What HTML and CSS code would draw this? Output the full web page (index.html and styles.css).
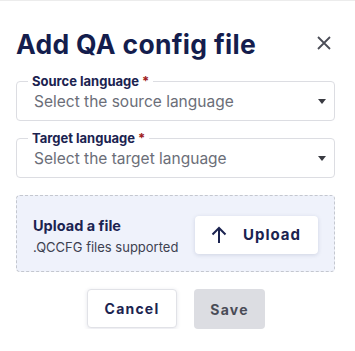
FILE: index.html
```html
<!DOCTYPE html>
<html lang="en">

<head>
    <meta charset="UTF-8">
    <meta name="viewport" content="width=device-width, initial-scale=1.0">
    <title>Add QA config file</title>
    <link rel="stylesheet" href="styles.css">
</head>

<body>
    <div class="dialog">
        <div class="header">
            <h1>Add QA config file</h1>
            <button class="close" aria-label="Close">
                <svg width="14" height="14" viewBox="0 0 14 14">
                    <path d="M1 1 L13 13 M13 1 L1 13" stroke="#4b4d57" stroke-width="1.8" fill="none" />
                </svg>
            </button>
        </div>

        <fieldset class="field">
            <legend>Source language <span class="req">*</span></legend>
            <div class="select">
                <span>Select the source language</span>
                <span class="caret"></span>
            </div>
        </fieldset>

        <fieldset class="field">
            <legend>Target language <span class="req">*</span></legend>
            <div class="select">
                <span>Select the target language</span>
                <span class="caret"></span>
            </div>
        </fieldset>

        <div class="upload">
            <div class="upload-text">
                <div class="upload-title">Upload a file</div>
                <div class="upload-hint">.QCCFG files supported</div>
            </div>
            <button class="upload-btn">
                <svg width="16" height="18" viewBox="0 0 16 18">
                    <path d="M8 17 V2 M1.5 8.5 L8 2 L14.5 8.5" stroke="#1b2350" stroke-width="2" fill="none" />
                </svg>
                Upload
            </button>
        </div>

        <div class="actions">
            <button class="btn cancel">Cancel</button>
            <button class="btn save" disabled>Save</button>
        </div>
    </div>
</body>

</html>
```

FILE: styles.css
```css
body {
    margin: 0;
    background: #fff;
    font-family: Inter, "Open Sans", sans-serif;
    color: #1b2350;
}

.dialog {
    border-top: 1px solid #ececec;
    padding: 0 20px 0 16px;
}

.header {
    display: flex;
    align-items: center;
    justify-content: space-between;
    height: 73px;
}

.header h1 {
    margin: 0;
    padding-top: 12px;
    font-size: 26.5px;
    font-weight: 700;
    letter-spacing: 0.3px;
    color: #141d4d;
}

.close {
    background: none;
    border: none;
    padding: 0;
    margin: 14px 4px 0 0;
    cursor: pointer;
}

.field {
    margin: 0 0 10px;
    padding: 0 10px 0 17px;
    border: 1px solid #dcdde2;
    border-radius: 4px;
    min-width: 0;
}

.field legend {
    padding: 0 4px;
    margin-left: -6px;
    font-size: 13px;
    line-height: 14px;
    font-weight: 700;
    color: #1b2350;
}

.req {
    color: #a01c1c;
}

.select {
    display: flex;
    align-items: center;
    justify-content: space-between;
    height: 26px;
    padding-bottom: 6px;
    font-size: 15.5px;
    color: #6b6e78;
}

.caret {
    width: 0;
    height: 0;
    border-left: 4.5px solid transparent;
    border-right: 4.5px solid transparent;
    border-top: 5px solid #3a3b42;
    margin-right: -2px;
}

.upload {
    margin-top: 17px;
    height: 75px;
    display: flex;
    align-items: center;
    justify-content: space-between;
    padding: 0 16px 0 16px;
    background: #eff2fb;
    border: 1px dashed #c4c7cf;
    border-radius: 4px;
}

.upload-text {
    padding-top: 5px;
}

.upload-title {
    font-size: 14.5px;
    font-weight: 700;
    color: #1b2350;
}

.upload-hint {
    margin-top: 5px;
    font-size: 13px;
    color: #3d4150;
}

.upload-btn {
    display: flex;
    align-items: center;
    gap: 16px;
    width: 123px;
    height: 38px;
    padding: 0 0 0 16px;
    margin-top: 2px;
    background: #fff;
    border: none;
    border-radius: 4px;
    box-shadow: 0 1px 4px rgba(30, 40, 90, 0.15);
    font-family: inherit;
    font-size: 15px;
    font-weight: 700;
    letter-spacing: 1px;
    color: #1b2350;
}

.actions {
    display: flex;
    justify-content: center;
    gap: 17px;
    margin-top: 17px;
    padding-left: 1px;
}

.btn {
    height: 39px;
    border-radius: 4px;
    font-family: inherit;
    font-size: 14px;
    font-weight: 700;
    letter-spacing: 1.2px;
}

.cancel {
    width: 90px;
    background: #fff;
    border: 1px solid #e1e2e7;
    box-shadow: 0 1px 4px rgba(30, 40, 90, 0.12);
    color: #1b2350;
}

.save {
    width: 71px;
    height: 40px;
    background: #dcdde2;
    border: none;
    color: #4a4c57;
}
```
